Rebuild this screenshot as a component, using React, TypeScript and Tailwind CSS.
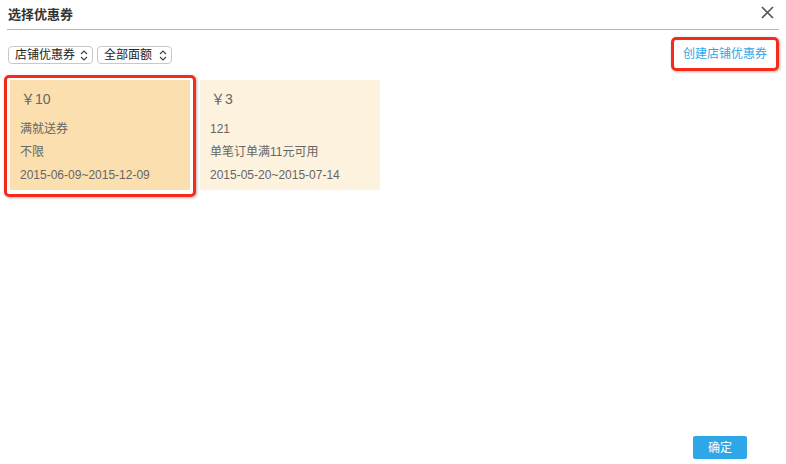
import React from 'react';

const font = { fontFamily: '"Liberation Sans", "Noto Sans CJK SC", sans-serif' };

const coupons = [
  { id: 'a', amount: '10', name: '满就送券', limit: '不限', range: '2015-06-09~2015-12-09', selected: true },
  { id: 'b', amount: '3', name: '121', limit: '单笔订单满11元可用', range: '2015-05-20~2015-07-14', selected: false },
];

const SelectBox = ({ label, width }: { label: string; width: string }) => (
  <div className={`${width} h-[18px] border border-[#c8c8c8] rounded-[4px] bg-white flex items-center justify-between pl-[6px] pr-[4px] text-[12px] text-[#222]`}>
    <span>{label}</span>
    <svg width="8" height="11" viewBox="0 0 8 11" fill="none" stroke="#444" strokeWidth="1.2">
      <path d="M1 4 L4 1 L7 4" />
      <path d="M1 7 L4 10 L7 7" />
    </svg>
  </div>
);

export default function App() {
  return (
    <div style={font} className="w-[786px] h-[464px] bg-white flex flex-col">
      <div className="mx-[7px] h-[30px] border-b border-[#b4b4b4] flex items-center justify-between">
        <span className="pl-[1px] text-[13px] font-bold text-[#333]">选择优惠券</span>
        <svg width="13" height="13" viewBox="0 0 13 13" stroke="#555" strokeWidth="1.6" className="mr-[5px] -mt-[5px]">
          <path d="M1 1 L12 12 M12 1 L1 12" />
        </svg>
      </div>

      <div className="flex items-center justify-between pl-[8px] pr-[7px] mt-[7px] h-[34px]">
        <div className="flex gap-[4px] mt-[2px]">
          <SelectBox label="店铺优惠券" width="w-[85px]" />
          <SelectBox label="全部面额" width="w-[75px]" />
        </div>
        <div className="relative h-[34px] w-[108px] flex items-center justify-center">
          <span className="text-[12px] text-[#2ea7e9]">创建店铺优惠券</span>
          <div className="absolute inset-0 border-[3px] border-[#f52a1a] rounded-[5px] shadow-[1px_1px_3px_rgba(0,0,0,0.3)]" />
        </div>
      </div>

      <div className="flex gap-[10px] pl-[10px] mt-[9px]">
        {coupons.map(c => (
          <div
            key={c.id}
            className={`relative w-[180px] h-[110px] pl-[10px] pt-[10px] text-[12px] text-[#666] ${c.selected ? 'bg-[#fbdfae]' : 'bg-[#fcf2dd]'}`}
          >
            <div className="text-[14px] h-[18px] leading-[18px] pl-[1px]">￥{c.amount}</div>
            <div className="mt-[10px] leading-[23px]">
              <div>{c.name}</div>
              <div>{c.limit}</div>
              <div>{c.range}</div>
            </div>
            {c.selected && (
              <div className="absolute -left-[6px] -top-[5px] -right-[6px] -bottom-[7px] border-[3px] border-[#f52a1a] rounded-[5px] shadow-[1px_1px_3px_rgba(0,0,0,0.3)]" />
            )}
          </div>
        ))}
      </div>

      <div className="flex-1" />
      <div className="flex justify-end pr-[39px] pb-[5px]">
        <button className="w-[54px] h-[23px] rounded-[2px] bg-[#2ea7e9] text-white text-[12px]">确定</button>
      </div>
    </div>
  );
}
